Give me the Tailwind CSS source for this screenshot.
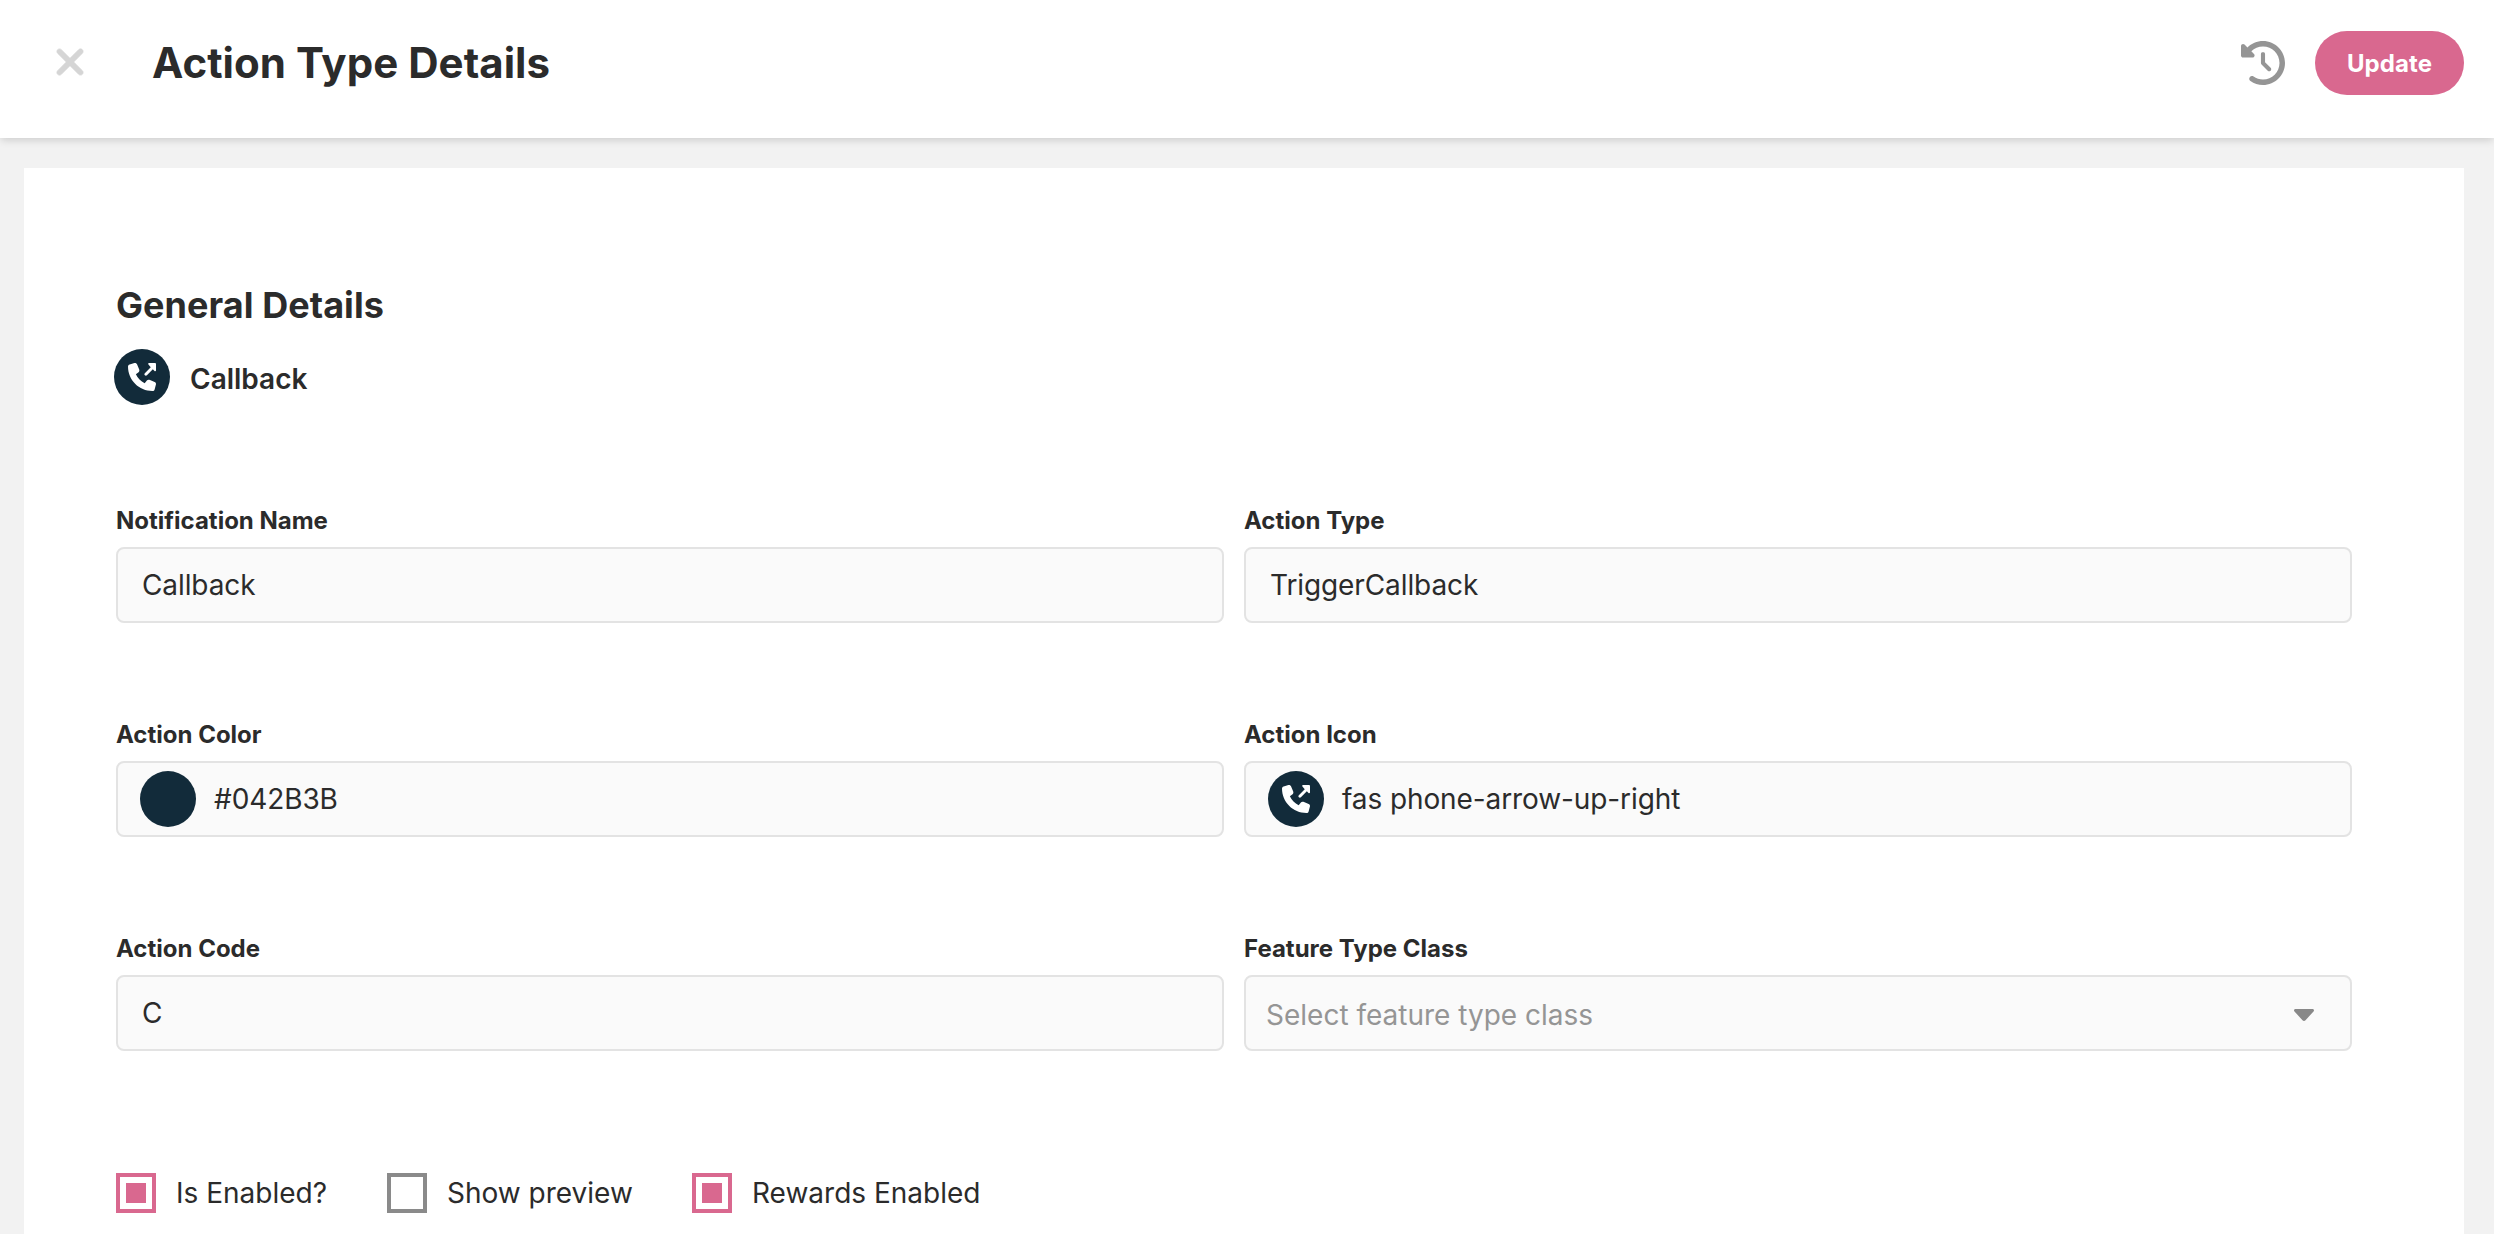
<!DOCTYPE html>
<html lang="en">
<head>
  <meta charset="utf-8">
  <title>Action Type Details</title>
  <script src="https://cdn.jsdelivr.net/npm/@tailwindcss/browser@4"></script>
</head>
<body class="h-screen overflow-hidden bg-[#f2f2f2] font-['Inter',sans-serif] text-[#2b2b2b]">
  <svg class="hidden">
    <symbol id="phone-out" viewBox="0 0 512 512">
      <path d="M164.9 24.6c-7.7-18.6-28-28.5-47.4-23.2l-88 24C12.1 30.2 0 46 0 64C0 311.4 200.6 512 448 512c18 0 33.8-12.1 38.6-29.5l24-88c5.3-19.4-4.6-39.7-23.2-47.4l-96-40c-16.3-6.8-35.2-2.1-46.3 11.6L304.7 368C234.3 334.7 177.3 277.7 144 207.3L193.3 167c13.7-11.2 18.4-30 11.6-46.3l-40-96z" />
      <path d="M384 0h112c9 0 16 7 16 16v120c0 14-17 21-27 11l-31-31-108 108c-11 11-27 11-38 0s-11-27 0-38l108-108-42-52c-10-11-4-26 10-26z" />
    </symbol>
  </svg>

  <div class="flex h-full flex-col">
    <header class="z-10 flex h-[138px] shrink-0 items-start bg-white pr-[30px] pl-[54px] shadow-[0_3px_8px_-1px_rgba(0,0,0,0.16)]">
      <button class="mt-[41px] flex w-8 justify-center text-[#d5d5d5]">
        <svg class="h-[42px] w-[32px]" viewBox="0 0 384 512" fill="currentColor" stroke="currentColor" stroke-width="8">
          <path d="M342.6 150.6c12.5-12.5 12.5-32.8 0-45.3s-32.8-12.5-45.3 0L192 210.7 86.6 105.4c-12.5-12.5-32.8-12.5-45.3 0s-12.5 32.8 0 45.3L146.7 256 41.4 361.4c-12.5 12.5-12.5 32.8 0 45.3s32.8 12.5 45.3 0L192 301.3 297.4 406.6c12.5 12.5 32.8 12.5 45.3 0s12.5-32.8 0-45.3L237.3 256 342.6 150.6z" />
        </svg>
      </button>
      <h1 class="mt-[38px] ml-[66px] text-[42px] leading-[50px] font-bold tracking-[0.03px]">Action Type Details</h1>
      <div class="ml-auto flex items-center gap-[30px] pt-[31px]">
        <svg class="size-11 text-[#959595]" viewBox="0 0 512 512" fill="currentColor">
          <path d="M75 75L41 41C25.9 25.9 0 36.6 0 57.9V168c0 13.3 10.7 24 24 24H134.1c21.4 0 32.1-25.9 17-41l-30.8-30.8C155 85.5 203 64 256 64c106 0 192 86 192 192s-86 192-192 192c-40.8 0-78.6-12.7-109.7-34.4c-14.5-10.1-34.4-6.6-44.6 7.9s-6.6 34.4 7.9 44.6C151.2 495 201.7 512 256 512c141.4 0 256-114.6 256-256S397.4 0 256 0C185.3 0 121.3 28.7 75 75zm181 53c-13.3 0-24 10.7-24 24V256c0 6.4 2.5 12.5 7 17l72 72c9.4 9.4 24.6 9.4 33.9 0s9.4-24.6 0-33.9l-65-65V152c0-13.3-10.7-24-24-24z" />
        </svg>
        <button class="h-16 w-[149px] rounded-full bg-[#d9688f] pt-0.5 text-2xl font-bold tracking-[0.1px] text-white">Update</button>
      </div>
    </header>

    <main class="mx-[30px] mt-[30px] ml-6 flex-1 bg-white pt-[115px] pr-28 pl-[92px]">
      <h2 class="text-4xl leading-[44px] font-bold tracking-[0.06px]">General Details</h2>
      <div class="mt-[22px] -ml-0.5 flex h-14 items-center gap-5">
        <div class="flex size-14 items-center justify-center rounded-full bg-[#122b3a] text-white">
          <svg class="size-7" fill="currentColor"><use href="#phone-out" /></svg>
        </div>
        <div class="pt-1 text-[28px] leading-8 font-semibold">Callback</div>
      </div>

      <div class="mt-[100px] grid grid-cols-2 gap-x-5 gap-y-24">
        <div class="flex h-[118px] flex-col justify-between pt-px">
          <label class="text-2xl leading-[30px] font-bold">Notification Name</label>
          <div class="flex h-[76px] items-center rounded-lg border-2 border-[#e3e3e3] bg-[#fafafa] px-6 text-[28px] tracking-[-0.1px]">Callback</div>
        </div>
        <div class="flex h-[118px] flex-col justify-between pt-px">
          <label class="text-2xl leading-[30px] font-bold">Action Type</label>
          <div class="flex h-[76px] items-center rounded-lg border-2 border-[#e3e3e3] bg-[#fafafa] px-6 text-[28px] tracking-[-0.1px]">TriggerCallback</div>
        </div>

        <div class="flex h-[118px] flex-col justify-between pt-px">
          <label class="text-2xl leading-[30px] font-bold">Action Color</label>
          <div class="flex h-[76px] items-center gap-[18px] rounded-lg border-2 border-[#e3e3e3] bg-[#fafafa] px-[22px] text-[28px] tracking-[-0.1px]">
            <span class="size-14 rounded-full bg-[#122b3a]"></span>
            <span>#042B3B</span>
          </div>
        </div>
        <div class="flex h-[118px] flex-col justify-between pt-px">
          <label class="text-2xl leading-[30px] font-bold">Action Icon</label>
          <div class="flex h-[76px] items-center gap-[18px] rounded-lg border-2 border-[#e3e3e3] bg-[#fafafa] px-[22px] text-[28px] tracking-[-0.1px]">
            <span class="flex size-14 items-center justify-center rounded-full bg-[#122b3a] text-white">
              <svg class="size-7" fill="currentColor"><use href="#phone-out" /></svg>
            </span>
            <span>fas phone-arrow-up-right</span>
          </div>
        </div>

        <div class="flex h-[118px] flex-col justify-between pt-px">
          <label class="text-2xl leading-[30px] font-bold">Action Code</label>
          <div class="flex h-[76px] items-center rounded-lg border-2 border-[#e3e3e3] bg-[#fafafa] px-6 text-[28px]">C</div>
        </div>
        <div class="flex h-[118px] flex-col justify-between pt-px">
          <label class="text-2xl leading-[30px] font-bold">Feature Type Class</label>
          <div class="flex h-[76px] items-center justify-between rounded-lg border-2 border-[#e3e3e3] bg-[#fafafa] pr-9 pl-5 text-[28px] text-[#959595]">
            <span class="pt-1">Select feature type class</span>
            <svg class="mt-1 h-3 w-5 text-[#888888]" viewBox="0 0 20 12" fill="currentColor">
              <path d="M1.5 0h17c1.4 0 2 1.6 1 2.6l-8 8.6c-.8.9-2.2.9-3 0l-8-8.6C-.5 1.6.1 0 1.5 0z" />
            </svg>
          </div>
        </div>
      </div>

      <div class="mt-[122px] flex text-[28px] leading-10">
        <label class="flex w-[271px] gap-5">
          <span class="flex size-10 items-center justify-center border-4 border-[#d9688f]"><span class="size-5 bg-[#d9688f]"></span></span>
          Is Enabled?
        </label>
        <label class="flex w-[305px] gap-5">
          <span class="size-10 border-4 border-[#8a8a8a]"></span>
          Show preview
        </label>
        <label class="flex gap-5">
          <span class="flex size-10 items-center justify-center border-4 border-[#d9688f]"><span class="size-5 bg-[#d9688f]"></span></span>
          Rewards Enabled
        </label>
      </div>
    </main>
  </div>
</body>
</html>
